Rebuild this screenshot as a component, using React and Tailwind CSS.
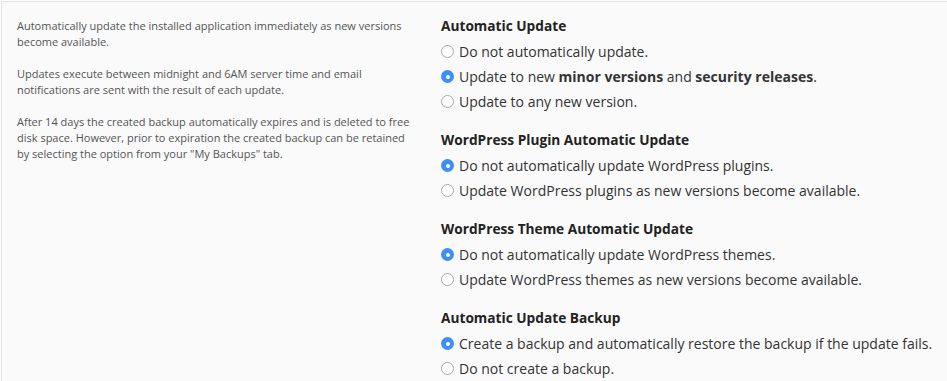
import React from 'react'

const SECTIONS = [
  {
    title: 'Automatic Update',
    options: [
      { label: 'Do not automatically update.' },
      {
        label: (
          <>
            Update to new <b className="font-bold">minor versions</b> and <b className="font-bold">security releases</b>.
          </>
        ),
        checked: true,
      },
      { label: 'Update to any new version.' },
    ],
  },
  {
    title: 'WordPress Plugin Automatic Update',
    options: [
      { label: 'Do not automatically update WordPress plugins.', checked: true },
      { label: 'Update WordPress plugins as new versions become available.' },
    ],
  },
  {
    title: 'WordPress Theme Automatic Update',
    options: [
      { label: 'Do not automatically update WordPress themes.', checked: true },
      { label: 'Update WordPress themes as new versions become available.' },
    ],
  },
  {
    title: 'Automatic Update Backup',
    options: [
      { label: 'Create a backup and automatically restore the backup if the update fails.', checked: true },
      { label: 'Do not create a backup.' },
    ],
  },
]

function Radio({ checked }) {
  if (checked) {
    return (
      <span className="w-[13px] h-[13px] rounded-full bg-[#3b8ff6] flex items-center justify-center shrink-0">
        <span className="w-[4px] h-[4px] rounded-full bg-white" />
      </span>
    )
  }
  return <span className="w-[13px] h-[13px] rounded-full bg-white border border-[#a9a9a9] shrink-0" />
}

export default function App() {
  return (
    <div className="min-h-screen bg-white pt-px pl-px">
      <div
        className="grid grid-cols-[425px_1fr] min-h-[380px] bg-[#fafafa] border-t border-l border-[#e3e3e3] text-[#333]"
        style={{ fontFamily: '"Open Sans", sans-serif' }}
      >
        {/* Help text */}
        <div className="pl-[15px] pr-4 pt-[16px] text-[11px] leading-4 text-[#555] space-y-4">
          <p>Automatically update the installed application immediately as new versions become available.</p>
          <p>Updates execute between midnight and 6AM server time and email notifications are sent with the result of each update.</p>
          <p>After 14 days the created backup automatically expires and is deleted to free disk space. However, prior to expiration the created backup can be retained by selecting the option from your "My Backups" tab.</p>
        </div>

        {/* Options */}
        <div className="pl-[14px] pt-[14px] pb-2 space-y-[16px]">
          {SECTIONS.map(s => (
            <div key={s.title}>
              <h3 className="text-[13.7px] font-bold leading-5 mb-[3px] text-[#222]">{s.title}</h3>
              {s.options.map((o, i) => (
                <label key={i} className="flex items-center gap-[5px] h-[25px] text-[14px]">
                  <Radio checked={o.checked} />
                  <span>{o.label}</span>
                </label>
              ))}
            </div>
          ))}
        </div>
      </div>
    </div>
  )
}
